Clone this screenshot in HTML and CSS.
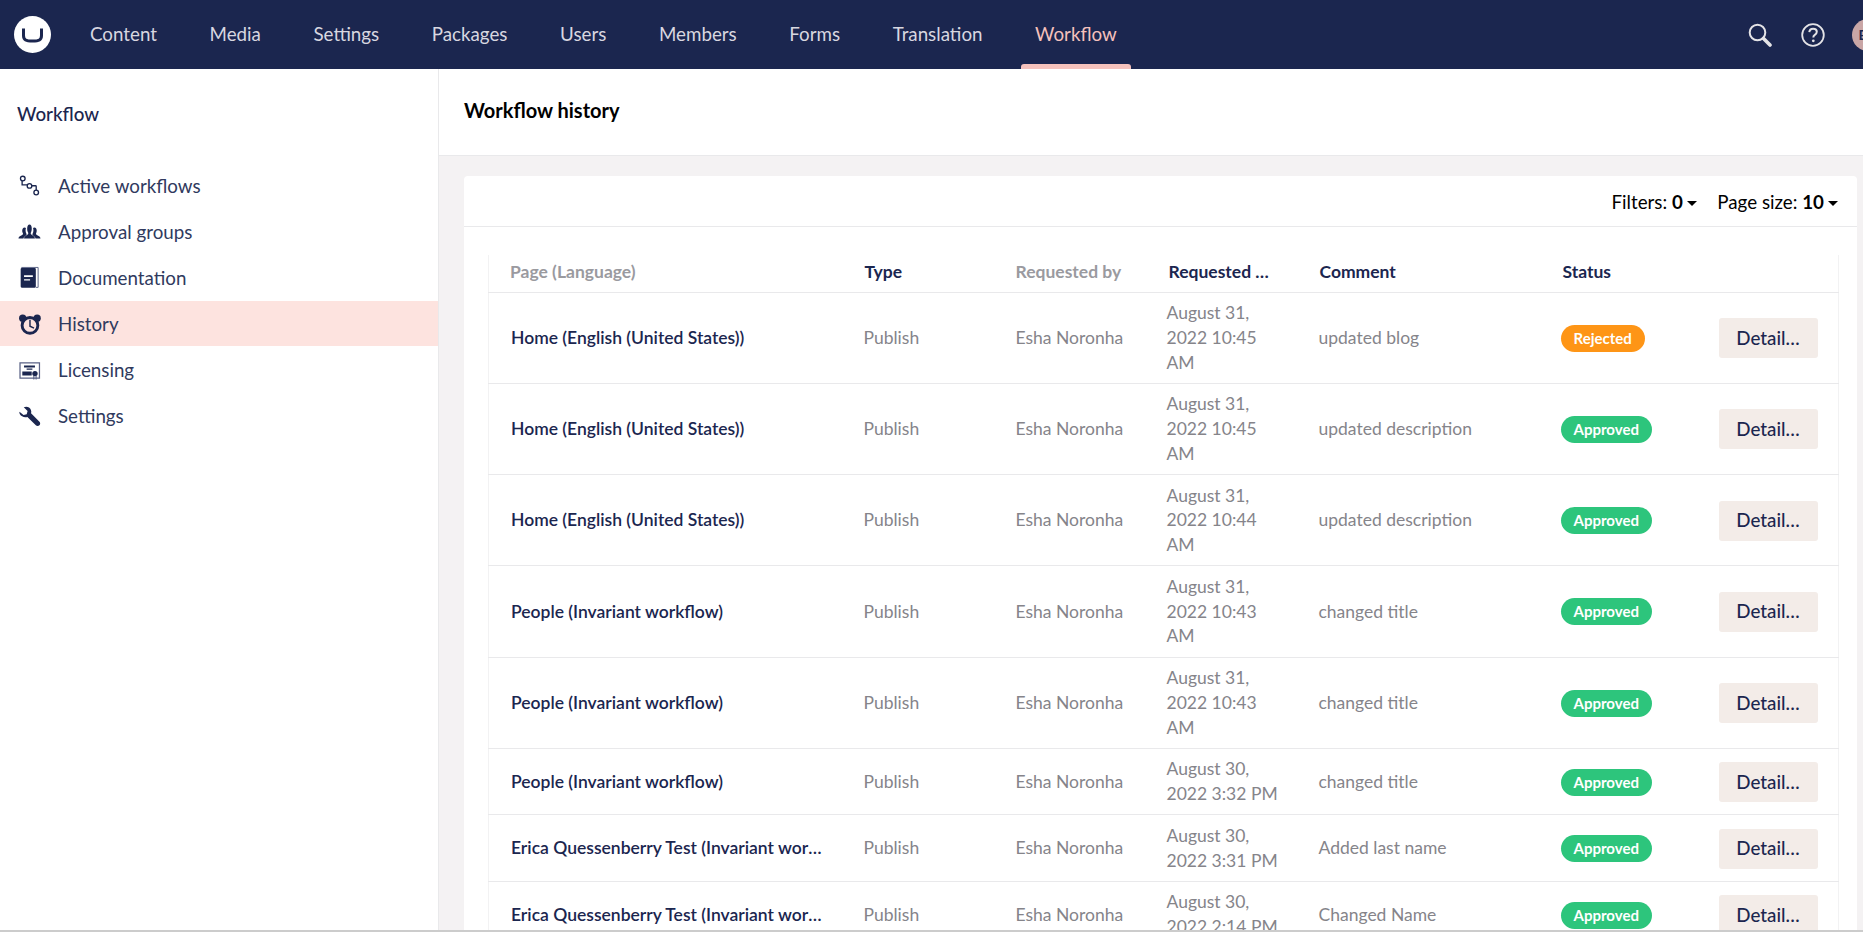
FILE: index.html
```html
<!DOCTYPE html>
<html lang="en">
<head>
<meta charset="utf-8">
<title>Workflow history</title>
<link rel="stylesheet" href="styles.css">
</head>
<body>
<div class="app">
<header class="topbar">
  <svg class="logo" viewBox="0 0 37 37"><circle cx="18.5" cy="18.5" r="18.5" fill="#fff"/><path d="M9.500 12.500v7c0 4.500 2.500 5.500 9 5.500s9-1 9-5.500v-7" fill="none" stroke="#1b264f" stroke-width="3"/></svg>
  <nav class="tabs">
    <a class="tab">Content</a>
    <a class="tab">Media</a>
    <a class="tab">Settings</a>
    <a class="tab">Packages</a>
    <a class="tab">Users</a>
    <a class="tab">Members</a>
    <a class="tab">Forms</a>
    <a class="tab">Translation</a>
    <a class="tab tab-active">Workflow</a>
  </nav>
  <div class="tools">
    <svg class="tool-search" viewBox="0 0 24 24"><circle cx="9.500" cy="9.500" r="7.800" fill="none" stroke="#e4e3e6" stroke-width="2"/><path d="M15.500 15.500l6.500 6.500" stroke="#e4e3e6" stroke-width="3.600" stroke-linecap="round"/></svg>
    <svg class="tool-help" viewBox="0 0 24 24"><circle cx="12" cy="12" r="10.800" fill="none" stroke="#e4e3e6" stroke-width="1.800"/><path d="M8.300 9.200c.2-2.300 1.700-3.500 3.800-3.500 2.200 0 3.700 1.300 3.700 3.100 0 1.500-.9 2.300-2 3-1.100.7-1.500 1.300-1.500 2.700" fill="none" stroke="#e4e3e6" stroke-width="2"/><circle cx="12.300" cy="17.800" r="1.400" fill="#e4e3e6"/></svg>
    <div class="avatar">EN</div>
  </div>
</header>
<div class="body">
  <aside class="side">
    <h2 class="side-title">Workflow</h2>
    <ul class="side-list">
      <li class="side-item">
        <svg class="ico" viewBox="0 0 24 24"><g fill="none" stroke="#1b264f" stroke-width="1.400"><circle cx="5" cy="4.700" r="2.400"/><circle cx="12" cy="12.400" r="2.400"/><circle cx="19" cy="19.300" r="2.400"/><path d="M4.300 7v4.300h5.400M14.400 12.300h3.800c.5 0 .8.300.8.800v3.800"/></g></svg>
        Active workflows
      </li>
      <li class="side-item">
        <svg class="ico" viewBox="0 0 24 24"><g fill="#1b264f"><path d="M.5 19.300c.3-2.800 3.600-3.100 4.500-4.200.4-.6.300-1.200-.1-1.900-.7-1-.9-5.400 1.900-5.400.7 0 1.200.2 1.500.6-.7 1.900-.4 4.600.5 6 .5 1-.1 1.700-1.400 2.500-1 .6-1.500 1.200-1.600 2.400z"/><path d="M23.500 19.300c-.3-2.800-3.600-3.100-4.500-4.200-.4-.6-.3-1.200.1-1.900.7-1 .9-5.400-1.900-5.400-.7 0-1.200.2-1.500.6.7 1.900.4 4.600-.5 6-.5 1 .1 1.700 1.400 2.500 1 .6 1.500 1.200 1.600 2.400z"/><path d="M6.300 19.300c.2-3 3.500-3.300 4.300-4.700.3-.7.200-1.300-.3-2.100-1-1.500-1.300-7.800 1.700-7.800s2.700 6.300 1.700 7.800c-.5.800-.6 1.400-.3 2.100.8 1.400 4.100 1.700 4.300 4.700z"/></g></svg>
        Approval groups
      </li>
      <li class="side-item">
        <svg class="ico" viewBox="0 0 24 24"><rect x="2.800" y="2" width="15.800" height="20.700" rx="1.200" fill="#1b264f"/><path d="M3.500 1.500h17.500v20.800h-2.500" fill="none" stroke="#5a6285" stroke-width="1"/><path d="M6.300 9.700h9.200v1.900H6.300zM6.300 13.800h6.300v1.400H6.300z" fill="#fff"/></svg>
        Documentation
      </li>
      <li class="side-item side-active">
        <svg class="ico" viewBox="0 0 24 24"><circle cx="4.900" cy="6.500" r="3.800" fill="#1b264f"/><circle cx="20" cy="6.500" r="3.800" fill="#1b264f"/><circle cx="12.500" cy="14" r="8.200" fill="#fde3df" stroke="#1b264f" stroke-width="3"/><path d="M12.500 8v6.800l4.200 2.100" fill="none" stroke="#1b264f" stroke-width="1.500"/></svg>
        History
      </li>
      <li class="side-item">
        <svg class="ico" viewBox="0 0 24 24"><path d="M2.100 5.200h20.300v15.800H2.100z" fill="none" stroke="#5a6285" stroke-width="1.300"/><path d="M6.300 7.800h11.400V10H6.300zM9 10.900h6v1.400H9zM4.500 14h9.800v4.300H4.500z" fill="#1b264f"/><circle cx="17.700" cy="16.300" r="2.800" fill="#1b264f"/><path d="M16.500 18.500v4M18.900 18.500v4" stroke="#5a6285" stroke-width="1.100"/></svg>
        Licensing
      </li>
      <li class="side-item">
        <svg class="ico" viewBox="0 0 24 24"><path transform="translate(0 1.800)" d="M1.500 6.200L5.800 9.700l3.300-.9.900-3.300L6 1.700C9.100.4 12.300 1.500 13.500 4.500c.5 1.200.5 2.300.1 3.400l8.800 8.800c1 1 1 2.700 0 3.700-1 1-2.800 1-3.800 0L9.800 11.700c-1.900.6-3.900.4-5.500-.7C2.400 9.700 1 8.200 1.500 6.200z" fill="#1b264f"/></svg>
        Settings
      </li>
    </ul>
  </aside>
  <main class="main">
    <div class="main-head"><h1 class="main-title">Workflow history</h1></div>
    <section class="card">
      <div class="toolbar">
        <span class="filter">Filters: <b>0</b><i class="caret"></i></span>
        <span class="filter">Page size: <b>10</b><i class="caret"></i></span>
      </div>
      <div class="table-wrap">
        <table class="grid">
          <colgroup><col class="c-name"><col class="c-type"><col class="c-by"><col class="c-on"><col class="c-comment"><col class="c-status"><col class="c-action"></colgroup>
          <thead>
            <tr><th class="muted">Page (Language)</th><th>Type</th><th class="muted">Requested by</th><th>Requested …</th><th>Comment</th><th>Status</th><th></th></tr>
          </thead>
          <tbody>
            <tr><td class="name"><span>Home (English (United States))</span></td><td>Publish</td><td>Esha Noronha</td><td class="date">August 31, 2022 10:45 AM</td><td>updated blog</td><td><span class="badge rejected">Rejected</span></td><td><button class="btn">Detail…</button></td></tr>
            <tr><td class="name"><span>Home (English (United States))</span></td><td>Publish</td><td>Esha Noronha</td><td class="date">August 31, 2022 10:45 AM</td><td>updated description</td><td><span class="badge approved">Approved</span></td><td><button class="btn">Detail…</button></td></tr>
            <tr><td class="name"><span>Home (English (United States))</span></td><td>Publish</td><td>Esha Noronha</td><td class="date">August 31, 2022 10:44 AM</td><td>updated description</td><td><span class="badge approved">Approved</span></td><td><button class="btn">Detail…</button></td></tr>
            <tr><td class="name"><span>People (Invariant workflow)</span></td><td>Publish</td><td>Esha Noronha</td><td class="date">August 31, 2022 10:43 AM</td><td>changed title</td><td><span class="badge approved">Approved</span></td><td><button class="btn">Detail…</button></td></tr>
            <tr><td class="name"><span>People (Invariant workflow)</span></td><td>Publish</td><td>Esha Noronha</td><td class="date">August 31, 2022 10:43 AM</td><td>changed title</td><td><span class="badge approved">Approved</span></td><td><button class="btn">Detail…</button></td></tr>
            <tr><td class="name"><span>People (Invariant workflow)</span></td><td>Publish</td><td>Esha Noronha</td><td class="date">August 30, 2022 3:32 PM</td><td>changed title</td><td><span class="badge approved">Approved</span></td><td><button class="btn">Detail…</button></td></tr>
            <tr><td class="name"><span>Erica Quessenberry Test (Invariant workflow)</span></td><td>Publish</td><td>Esha Noronha</td><td class="date">August 30, 2022 3:31 PM</td><td>Added last name</td><td><span class="badge approved">Approved</span></td><td><button class="btn">Detail…</button></td></tr>
            <tr><td class="name"><span>Erica Quessenberry Test (Invariant workflow)</span></td><td>Publish</td><td>Esha Noronha</td><td class="date">August 30, 2022 2:14 PM</td><td>Changed Name</td><td><span class="badge approved">Approved</span></td><td><button class="btn">Detail…</button></td></tr>
          </tbody>
        </table>
      </div>
    </section>
  </main>
</div>
</div>
</body>
</html>
```

FILE: styles.css
```css
* { box-sizing: border-box; }
html, body { margin: 0; height: 100%; overflow: hidden; }
body { font-family: Lato, "Open Sans", sans-serif; color: #1b264f; background: #fff; }
.app { height: 932px; display: flex; flex-direction: column; border-bottom: 2px solid #ccc; overflow: hidden; }

.topbar { height: 69px; flex: none; background: #1b264f; display: flex; align-items: center; }
.logo { width: 37px; height: 37px; margin-left: 14px; flex: none; }
.tabs { display: flex; height: 100%; margin-left: 25px; gap: 24.600px; }
.tab { position: relative; display: flex; align-items: center; padding: 0 14px 3px; height: 100%; font-size: 18.750px; color: #d8d7e0; }
.tab-active { color: #f5c1bc; }
.tab-active::after { content: ""; position: absolute; left: 0; right: 0; bottom: 0; height: 5px; background: #f5c1bc; border-radius: 3px 3px 0 0; }
.tools { margin-left: auto; display: flex; align-items: center; position: relative; width: 115px; height: 100%; flex: none; }
.tool-search { width: 24px; height: 24px; margin-left: 0; flex: none; }
.tool-help { width: 24px; height: 24px; margin-left: 29px; flex: none; }
.avatar { width: 32px; height: 32px; margin-left: 27px; flex: none; border-radius: 50%; background: #c9a6a6; color: #1b264f; font-size: 14px; display: flex; align-items: center; justify-content: center; font-weight: 700; }

.body { flex: 1; min-height: 0; display: flex; }
.side { width: 439px; flex: none; border-right: 1px solid #e9e9eb; background: #fff; }
.side-title { margin: 0; padding: 33px 0 0 17px; height: 93.5px; font-size: 18.750px; line-height: 23px; font-weight: 500; color: #1b264f; }
.side-list { list-style: none; margin: 0; padding: 0; }
.side-item { height: 46px; display: flex; align-items: center; padding: 0 0 1px 18px; font-size: 18.750px; color: #303a5e; }
.side-active { background: #fde3df; height: 45px; margin-bottom: 1px; padding-bottom: 0; }
.ico { width: 23px; height: 23px; margin-right: 17px; flex: none; }

.main { flex: 1; min-width: 0; background: #f4f2f3; display: flex; flex-direction: column; }
.main-head { height: 87px; flex: none; background: #fff; border-bottom: 1px solid #e9e9eb; display: flex; align-items: center; padding-left: 25px; }
.main-title { margin: 0 0 4px; font-size: 20px; font-weight: 700; color: #000; }
.card { flex: 1; min-height: 0; margin: 20px 6px 0 25px; background: #fff; border-radius: 4px 4px 0 0; overflow: hidden; }
.toolbar { height: 51px; border-bottom: 1px solid #e9e9eb; display: flex; justify-content: flex-end; align-items: center; gap: 20.500px; padding-right: 19px; font-size: 18.750px; color: #000; }
.filter b { font-weight: 700; }
.caret { display: inline-block; margin-left: 4px; vertical-align: middle; border-left: 5px solid transparent; border-right: 5px solid transparent; border-top: 5px solid #000; }

.table-wrap { padding: 28px 19px 0 24px; }
.grid { width: 1350px; table-layout: fixed; border-collapse: collapse; border-left: 1px solid #f2f2f3; border-right: 1px solid #f2f2f3; font-size: 17.500px; }
.c-name { width: 375px; } .c-type { width: 152px; } .c-by { width: 151px; } .c-on { width: 152px; } .c-comment { width: 242px; } .c-status { width: 158px; } .c-action { width: 120px; }
.grid th { height: 37px; padding: 0 0 3px 1px; text-align: left; font-weight: 700; color: #1b264f; border-bottom: 1px solid #e9e9eb; white-space: nowrap; }
.grid th:first-child { padding-left: 21px; }
.grid th:nth-child(3) { padding-left: 0; }
.grid th:nth-child(4), .grid th:nth-child(6) { padding-left: 2px; }
.grid th.muted { color: #9a9a9f; }
.grid td { padding: 8.500px 0 7.500px; line-height: 24.750px; color: #85848a; border-bottom: 1px solid #e9e9eb; vertical-align: middle; }
.grid td.name { padding-left: 22px; padding-right: 36px; font-weight: 600; color: #1b264f; }
.name span { display: block; overflow: hidden; text-overflow: ellipsis; white-space: nowrap; }
.grid td.date { padding-right: 37px; }
.badge { display: inline-block; height: 27px; line-height: 27px; padding: 0 13px; border-radius: 14px; color: #fff; font-size: 15px; font-weight: 700; vertical-align: middle; }
.rejected { background: #fe9516; }
.approved { background: #2dc57c; }
.btn { display: block; width: 99px; height: 40px; padding: 0 0 2px; border: 0; border-radius: 3px; background: #f3ece8; color: #1b264f; font: 500 18.750px Lato, sans-serif; }
```
